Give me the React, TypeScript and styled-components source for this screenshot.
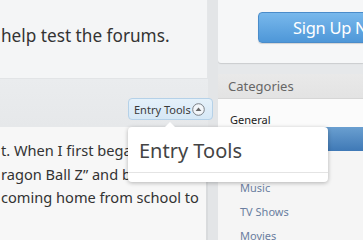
import React from "react";
import styled, { createGlobalStyle } from "styled-components";

const Global = createGlobalStyle`
  html, body { margin: 0; padding: 0; }
  body { background: #e6e8ea; font-family: "Noto Sans", "Open Sans", sans-serif; }
`;

const Page = styled.div`
  position: relative;
  width: 363px;
  height: 240px;
  overflow: hidden;
  display: grid;
  grid-template-columns: 208px 10px 145px;
  background: #e6e8ea;
`;

const Main = styled.div`
  display: flex;
  flex-direction: column;
  background: #e9ebed;
  min-width: 0;
`;

const PostTop = styled.div`
  height: 79px;
  box-sizing: border-box;
  background: #f4f5f6;
  border-bottom: 1px solid #e2e4e6;
  border-right: 1px solid #e4e6e8;
  display: flex;
  align-items: center;
  padding: 0 0 8px 1px;
  overflow: hidden;
`;

const BodyText = styled.p`
  margin: 0;
  font-size: 17.2px;
  color: #333;
  white-space: nowrap;
`;

const ToolBand = styled.div`
  height: 48px;
  display: flex;
  justify-content: flex-end;
  align-items: flex-start;
  padding: 19px 0 0 0;
  box-sizing: border-box;
  background: linear-gradient(#eaecee, #e6e8ea);
`;

const ToolButton = styled.button`
  flex: none;
  width: 85px;
  height: 22px;
  margin-right: -5px;
  box-sizing: border-box;
  display: flex;
  align-items: center;
  gap: 1px;
  padding: 0 0 0 5px;
  border: 1px solid #b5d1e8;
  border-radius: 4px;
  background: linear-gradient(#e5f1fa, #d6e8f6);
  font-family: inherit;
  font-size: 11px;
  color: #3a3a3a;
  position: relative;
  z-index: 1;
`;

const PostBottom = styled.div`
  flex: 1;
  background: #f7f7f7;
  border-right: 2px solid #d9dbdd;
  padding: 12px 0 0 1px;
  display: flex;
  flex-direction: column;
  overflow: hidden;
`;

const Line = styled.div`
  font-size: 14.6px;
  line-height: 23.5px;
  color: #333;
  white-space: nowrap;
`;

const Gutter = styled.div`
  background: #e3e5e7;
`;

const Side = styled.div`
  display: flex;
  flex-direction: column;
  gap: 11px;
  min-width: 0;
  overflow: hidden;
`;

const SignUpBox = styled.div`
  height: 63px;
  flex: none;
  box-sizing: border-box;
  background: #f6f7f8;
  border-bottom-left-radius: 3px;
  box-shadow: 0 1px 1px rgba(0, 0, 0, 0.12);
  padding: 12px 0 0 40px;
  overflow: hidden;
  white-space: nowrap;
`;

const SignUpButton = styled.div`
  display: inline-flex;
  width: 170px;
  min-width: 170px;
  height: 31px;
  box-sizing: border-box;
  border: 1px solid #4a8cca;
  border-radius: 4px;
  background: linear-gradient(#78b8ec, #4e97d8);
  color: #fff;
  font-size: 16.5px;
  letter-spacing: -0.3px;
  align-items: center;
  padding-left: 34px;
  white-space: nowrap;
  box-shadow: 0 1px 1px rgba(0, 0, 0, 0.15);
`;

const CatBox = styled.div`
  flex: 1;
  display: flex;
  flex-direction: column;
  background: #f5f5f5;
`;

const CatHeader = styled.div`
  height: 25px;
  box-sizing: border-box;
  background: linear-gradient(#e9e9e9, #e3e3e3);
  border-bottom: 1px solid #d6d6d6;
  display: flex;
  align-items: center;
  padding-left: 10px;
  font-size: 13px;
  color: #666;
`;

const CatTop = styled.div`
  background: #fbfbfb;
  height: 28px;
  display: flex;
  align-items: flex-end;
  padding: 0 0 0 12px;
  box-sizing: border-box;
  font-size: 11px;
  color: #222;
`;

const CatSelected = styled.div`
  height: 24px;
  background: linear-gradient(#6a9fd0, #3f79b6);
`;

const CatList = styled.div`
  display: flex;
  flex-direction: column;
  padding: 28px 0 0 22px;
  gap: 7px;
`;

const CatLink = styled.div`
  font-size: 11px;
  line-height: 17px;
  color: #6a7ea0;
`;

const Popup = styled.div`
  position: absolute;
  left: 128px;
  top: 127px;
  width: 200px;
  height: 55px;
  box-sizing: border-box;
  background: #fff;
  border-radius: 4px;
  box-shadow: 0 1px 4px rgba(0, 0, 0, 0.28);
  display: flex;
  flex-direction: column;
  z-index: 2;

  &::before {
    content: "";
    position: absolute;
    left: 36px;
    top: -5px;
    border-left: 6px solid transparent;
    border-right: 6px solid transparent;
    border-bottom: 6px solid #fff;
  }
`;

const PopupTitle = styled.div`
  height: 46px;
  box-sizing: border-box;
  border-bottom: 1px solid #e4e4e4;
  padding: 10px 0 0 11px;
  font-size: 20px;
  color: #444;
`;

const UpIcon = () => (
  <svg width="13" height="13" viewBox="0 0 13 13">
    <circle cx="6.5" cy="6.5" r="5.8" fill="#f2f6fa" stroke="#7a7f85" strokeWidth="1" />
    <path d="M3.6 8 L6.5 4.6 L9.4 8 Z" fill="#666" />
  </svg>
);

export default function App() {
  return (
    <>
      <Global />
      <Page>
        <Main>
          <PostTop>
            <BodyText>help test the forums.</BodyText>
          </PostTop>
          <ToolBand>
            <ToolButton>
              Entry Tools <UpIcon />
            </ToolButton>
          </ToolBand>
          <PostBottom>
            <Line>t. When I first began watching</Line>
            <Line>ragon Ball Z” and became hooked</Line>
            <Line>coming home from school to</Line>
          </PostBottom>
        </Main>
        <Gutter />
        <Side>
          <SignUpBox>
            <SignUpButton>Sign Up Now</SignUpButton>
          </SignUpBox>
          <CatBox>
            <CatHeader>Categories</CatHeader>
            <CatTop>General</CatTop>
            <CatSelected />
            <CatList>
              <CatLink>Music</CatLink>
              <CatLink>TV Shows</CatLink>
              <CatLink>Movies</CatLink>
            </CatList>
          </CatBox>
        </Side>
        <Popup>
          <PopupTitle>Entry Tools</PopupTitle>
        </Popup>
      </Page>
    </>
  );
}
